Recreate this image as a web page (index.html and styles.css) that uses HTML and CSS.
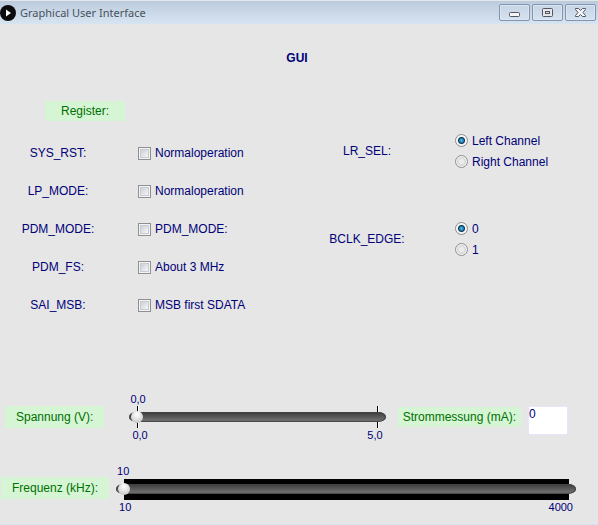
FILE: index.html
```html
<!DOCTYPE html>
<html lang="en">
<head>
    <meta charset="UTF-8">
    <meta name="viewport" content="width=device-width, initial-scale=1.0">
    <title>Graphical User Interface</title>
    <link rel="stylesheet" href="styles.css">
</head>
<body>
    <header class="titlebar">
        <svg class="app-icon" width="16" height="16" viewBox="0 0 16 16">
            <circle cx="8" cy="8" r="8" fill="#0c0c0c"/>
            <path d="M6 4.5v7l5-3.5z" fill="#fff"/>
        </svg>
        <span class="title">Graphical User Interface</span>
        <div class="window-buttons">
            <button type="button" aria-label="Minimize">
                <svg width="13" height="11" viewBox="0 0 13 11">
                    <rect x="1.5" y="5.5" width="10" height="4" rx="1" fill="#f6f6f6" stroke="#535666"/>
                </svg>
            </button>
            <button type="button" aria-label="Maximize">
                <svg width="13" height="11" viewBox="0 0 13 11">
                    <rect x="1.5" y="1.5" width="10" height="8" rx="1" fill="#e6e6e6" stroke="#535666"/>
                    <rect x="4.5" y="4.5" width="4" height="2" fill="#c9d8e8" stroke="#535666"/>
                </svg>
            </button>
            <button type="button" aria-label="Close">
                <svg width="13" height="11" viewBox="0 0 13 11">
                    <path d="M1.5 1.5h3l2 2 2-2h3v1l-2.5 3 2.5 3v1h-3l-2-2-2 2h-3v-1l2.5-3-2.5-3z" fill="#f6f6f6" stroke="#535666" stroke-linejoin="round"/>
                </svg>
            </button>
        </div>
    </header>

    <main>
        <h1>GUI</h1>
        <h2 class="tag register-tag">Register:</h2>

        <div class="registers">
            <div class="checks">
                <div class="check-row">
                    <span class="name">SYS_RST:</span>
                    <label class="option"><input type="checkbox">Normaloperation</label>
                </div>
                <div class="check-row">
                    <span class="name">LP_MODE:</span>
                    <label class="option"><input type="checkbox">Normaloperation</label>
                </div>
                <div class="check-row">
                    <span class="name">PDM_MODE:</span>
                    <label class="option"><input type="checkbox">PDM_MODE:</label>
                </div>
                <div class="check-row">
                    <span class="name">PDM_FS:</span>
                    <label class="option"><input type="checkbox">About 3 MHz</label>
                </div>
                <div class="check-row">
                    <span class="name">SAI_MSB:</span>
                    <label class="option"><input type="checkbox">MSB first SDATA</label>
                </div>
            </div>

            <div class="radios">
                <div class="radio-row" role="radiogroup" aria-labelledby="lrSel">
                    <span class="name" id="lrSel">LR_SEL:</span>
                    <div class="options">
                        <label class="option"><input type="radio" name="lr_sel" checked>Left Channel</label>
                        <label class="option"><input type="radio" name="lr_sel">Right Channel</label>
                    </div>
                </div>
                <div class="radio-row" role="radiogroup" aria-labelledby="bclkEdge">
                    <span class="name" id="bclkEdge">BCLK_EDGE:</span>
                    <div class="options">
                        <label class="option"><input type="radio" name="bclk_edge" checked>0</label>
                        <label class="option"><input type="radio" name="bclk_edge">1</label>
                    </div>
                </div>
            </div>
        </div>

        <div class="row voltage">
            <label class="tag" for="voltage">Spannung (V):</label>
            <div class="slider">
                <output for="voltage">0,0</output>
                <div class="range"><input type="range" id="voltage" min="0" max="5" step="0.1" value="0"></div>
                <div class="scale"><span>0,0</span><span>5,0</span></div>
            </div>
            <label class="tag current-tag" for="current">Strommessung (mA):</label>
            <textarea id="current" class="current">0</textarea>
        </div>

        <div class="row frequency">
            <label class="tag" for="frequency">Frequenz (kHz):</label>
            <div class="slider">
                <output for="frequency">10</output>
                <div class="range dense"><input type="range" id="frequency" min="10" max="4000" value="10"></div>
                <div class="scale"><span>10</span><span>4000</span></div>
            </div>
        </div>
    </main>
</body>
</html>
```

FILE: styles.css
```css
* {
    box-sizing: border-box;
}
body {
    margin: 0;
    min-height: 100vh;
    background-color: #e6e6e6;
    border-bottom: 1px solid #d5e3f2;
    font-family: "Liberation Sans", Arial, sans-serif;
    font-size: 12px;
    line-height: 14px;
    color: #000078;
}

/* Title bar */
.titlebar {
    display: flex;
    align-items: center;
    height: 24px;
    padding-right: 2px;
    border-top: 1px solid #e3e6ea;
    background: linear-gradient(#bccbdc, #d7e4f2);
}
.app-icon {
    flex: none;
}
.title {
    flex: 1;
    margin-left: 4px;
    font-family: "Noto Sans", sans-serif;
    font-size: 11px;
    color: #49525e;
}
.window-buttons {
    display: flex;
    gap: 2px;
}
.window-buttons button {
    display: flex;
    align-items: center;
    justify-content: center;
    width: 31px;
    height: 17px;
    padding: 0;
    border: 1px solid #8593b3;
    border-radius: 2px;
    background: linear-gradient(#c6d4e4, #d5e2f0);
    box-shadow: inset 0 0 0 1px #dce6f1;
}

h1 {
    margin: 0;
    padding: 27px 4px 0 0;
    font-size: 12px;
    text-align: center;
}
.tag {
    flex: none;
    padding: 4px 11px;
    background-color: #d5f5d5;
    color: #007000;
    white-space: nowrap;
}
.register-tag {
    width: fit-content;
    margin: 36px 0 0 45px;
    padding: 3px 16px;
    font-size: 12px;
    font-weight: normal;
}

/* Register settings */
.registers {
    display: grid;
    grid-template-columns: 1fr 1fr;
    margin-top: 13px;
}
.check-row {
    display: grid;
    grid-template-columns: 116px 1fr;
    column-gap: 22px;
    align-items: center;
    height: 38px;
}
.radio-row {
    display: grid;
    grid-template-columns: 136px 1fr;
    column-gap: 20px;
    align-items: center;
    height: 88px;
}
.radios {
    margin-top: -27px;
}
.name {
    text-align: center;
}
.options {
    display: flex;
    flex-direction: column;
    gap: 7px;
}
.option {
    display: flex;
    align-items: center;
    gap: 4px;
}
.option input {
    appearance: none;
    width: 13px;
    height: 13px;
    margin: 0;
    border: 1px solid #8e8f8f;
}
input[type="checkbox"] {
    background: linear-gradient(135deg, #cbd0d8, #f6f6f6) content-box, #f4f4f4;
    padding: 2px;
    outline: 1px solid #c6cad2;
    outline-offset: -3px;
}
input[type="radio"] {
    border-radius: 50%;
    background: radial-gradient(circle, #ececec 2px, #d3d6d8 4px, #f4f4f4 5px);
}
input[type="radio"]:checked {
    background: radial-gradient(circle, #5cc4ee 0, #2080b4 2px, #0b2f4e 3px, #f4f4f4 4px);
}

/* Sliders */
.row {
    display: flex;
    align-items: center;
}
.voltage {
    margin-top: 68px;
    padding: 0 30px 0 5px;
}
.voltage .slider {
    margin: 0 12px 0 25px;
}
.frequency {
    align-items: flex-start;
    margin-top: 22px;
    padding: 0 22px 0 1px;
}
.frequency .tag {
    margin-top: 13px;
}
.frequency .slider {
    margin-left: 7px;
}
.slider {
    flex: 1;
    min-width: 0;
    font-size: 11px;
}
.slider output {
    display: block;
    padding-left: 1px;
}
.range {
    padding: 6px 0;
    background:
        linear-gradient(90deg, #000 1px, #fff 1px) 8px 0 / 2px 100% no-repeat,
        linear-gradient(90deg, #000 1px, #fff 1px) calc(100% - 7px) 0 / 2px 100% no-repeat;
}
.range.dense {
    background: linear-gradient(#000, #000) 8px 1px / calc(100% - 15px) 21px no-repeat;
}
.range input {
    appearance: none;
    display: block;
    width: 100%;
    height: 10px;
    margin: 0;
    padding: 0 2px;
    border-radius: 8px / 5px;
    background: linear-gradient(#3a3a3a, #7a7a7a);
    box-shadow: inset 0 0 1px 1px #444;
}
.range input::-webkit-slider-runnable-track {
    height: 10px;
}
.range input::-webkit-slider-thumb {
    appearance: none;
    width: 12px;
    height: 12px;
    margin-top: -1px;
    border-radius: 50%;
    background: radial-gradient(circle at 50% 30%, #fff, #d8d8d8 60%, #a8a8a8);
}
.scale {
    display: flex;
    justify-content: space-between;
    padding: 0 3px;
}
.current-tag {
    padding: 3px 5px;
}
.current {
    align-self: flex-start;
    width: 40px;
    height: 29px;
    margin: 14px 0 0 7px;
    padding: 0;
    border: 1px solid #e4e6fb;
    background-color: #fff;
    color: inherit;
    font: inherit;
    resize: none;
    overflow: hidden;
}
```
